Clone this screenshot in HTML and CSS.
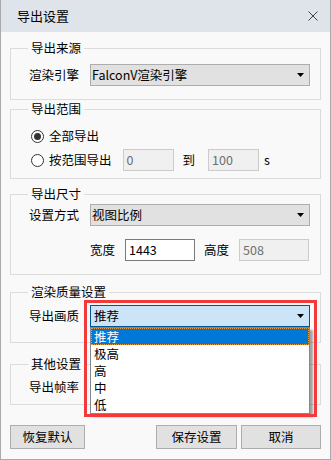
FILE: index.html
```html
<!DOCTYPE html>
<html>
<head>
    <title>导出设置</title>
    <meta charset="utf-8">
    <link rel="stylesheet" href="styles.css">
</head>
<body>
    <div class="window">
        <div class="titlebar">
            <span class="title">导出设置</span>
            <svg class="close" width="10" height="10" viewBox="0 0 10 10">
                <path d="M0.5 0.5L9.5 9.5M9.5 0.5L0.5 9.5" stroke="#444" stroke-width="1" fill="none"/>
            </svg>
        </div>

        <div class="content">
            <fieldset class="group group-source">
                <legend>导出来源</legend>
                <div class="row">
                    <span class="label">渲染引擎</span>
                    <div class="select">
                        <span>FalconV渲染引擎</span>
                        <svg class="arrow" width="7" height="4" viewBox="0 0 7 4"><path d="M0 0H7L3.5 4Z" fill="#000"/></svg>
                    </div>
                </div>
            </fieldset>

            <fieldset class="group group-range">
                <legend>导出范围</legend>
                <div class="row row-radio">
                    <span class="radio checked"></span>
                    <span>全部导出</span>
                </div>
                <div class="row row-radio row-range">
                    <span class="radio"></span>
                    <span class="radio-text">按范围导出</span>
                    <div class="input input-small disabled">0</div>
                    <span class="to">到</span>
                    <div class="input input-small disabled">100</div>
                    <span class="unit">s</span>
                </div>
            </fieldset>

            <fieldset class="group group-size">
                <legend>导出尺寸</legend>
                <div class="row">
                    <span class="label">设置方式</span>
                    <div class="select">
                        <span>视图比例</span>
                        <svg class="arrow" width="7" height="4" viewBox="0 0 7 4"><path d="M0 0H7L3.5 4Z" fill="#000"/></svg>
                    </div>
                </div>
                <div class="row row-dims">
                    <span>宽度</span>
                    <div class="input input-wide">1443</div>
                    <span class="dim-label">高度</span>
                    <div class="input input-wide disabled">508</div>
                </div>
            </fieldset>

            <fieldset class="group group-quality">
                <legend>渲染质量设置</legend>
                <div class="row">
                    <span class="label">导出画质</span>
                    <div class="select-wrap">
                        <div class="select select-open">
                            <span>推荐</span>
                            <svg class="arrow" width="7" height="4" viewBox="0 0 7 4"><path d="M0 0H7L3.5 4Z" fill="#000"/></svg>
                        </div>
                        <ul class="dropdown">
                            <li class="selected">推荐</li>
                            <li>极高</li>
                            <li>高</li>
                            <li>中</li>
                            <li>低</li>
                        </ul>
                        <div class="mark"></div>
                    </div>
                </div>
            </fieldset>

            <fieldset class="group group-other">
                <legend>其他设置</legend>
                <div class="row">
                    <span class="label">导出帧率</span>
                    <!-- the frame-rate combo sits under the open list -->
                    <div class="select"></div>
                </div>
            </fieldset>
        </div>

        <div class="buttons">
            <div class="btn btn-reset">恢复默认</div>
            <div class="btn btn-save">保存设置</div>
            <div class="btn btn-cancel">取消</div>
        </div>
    </div>
</body>
</html>
```

FILE: styles.css
```css
* {
    box-sizing: border-box;
}
body {
    margin: 0;
    font-family: "Noto Sans CJK SC", "Noto Sans", sans-serif;
    font-size: 12.5px;
    line-height: 16px;
    color: #000;
}
.window {
    width: 331px;
    height: 460px;
    background: #f9f9f9;
    border: 1px solid #a9a9a9;
    border-top: none;
}
.titlebar {
    height: 32px;
    background: #dfe3ea;
    display: flex;
    align-items: center;
    justify-content: space-between;
    padding: 0 12px 0 16px;
}
.title {
    font-size: 13px;
}
.close {
    display: block;
}
.content {
    padding: 0 9px;
}
.group {
    margin: 0;
    border: 1px solid #dcdcdc;
    padding: 0 10px;
    min-width: 0;
}
.group legend {
    padding: 0 3px;
    margin-left: 7px;
    line-height: 16px;
}
.row {
    display: flex;
    align-items: center;
    height: 22px;
}
.label {
    width: 58px;
    margin-right: 11px;
    text-align: right;
}
.select {
    flex: 1;
    height: 22px;
    border: 1px solid #adadad;
    background: #e1e1e1;
    display: flex;
    align-items: center;
    justify-content: space-between;
    padding: 0 5px 0 1px;
}
.arrow {
    display: block;
}

/* group spacing */
.group-source {
    margin-top: 8px;
    padding-top: 8px;
    padding-bottom: 13px;
}
.group-range {
    margin-top: 1px;
    padding-top: 9px;
    padding-bottom: 7px;
}
.group-size {
    margin-top: 7px;
    padding-top: 2px;
    padding-bottom: 13px;
}
.group-quality {
    margin-top: 9px;
    padding-top: 5px;
    padding-bottom: 15px;
}
.group-other {
    margin-top: 13px;
    padding-top: 4px;
    padding-bottom: 6px;
}

/* radios */
.row-radio {
    height: 20px;
    padding-left: 10px;
}
.row-range {
    height: 22px;
    margin-top: 3px;
}
.radio {
    width: 13px;
    height: 13px;
    border: 1px solid #333;
    border-radius: 50%;
    background: #fff;
    margin-right: 5px;
    position: relative;
    flex-shrink: 0;
}
.radio.checked::after {
    content: "";
    position: absolute;
    left: 2px;
    top: 2px;
    width: 7px;
    height: 7px;
    border-radius: 50%;
    background: #333;
}
.radio-text {
    margin-right: 11px;
}
.input {
    height: 22px;
    border: 1px solid #7a7a7a;
    background: #fff;
    padding-left: 3px;
    display: flex;
    align-items: center;
}
.input.disabled {
    border-color: #cccccc;
    background: #f0f0f0;
    color: #6d6d6d;
}
.input-small {
    width: 51px;
}
.to {
    margin: 0 13px 0 9px;
}
.unit {
    margin-left: 5px;
}

/* size */
.row-dims {
    margin-top: 13px;
    padding-left: 69px;
}
.input-wide {
    width: 70px;
    margin-left: 10px;
}
.dim-label {
    margin-left: 9px;
}

/* open combo */
.select-wrap {
    flex: 1;
    position: relative;
}
.select-open {
    background: #cce4f7;
    border-color: #005499;
    padding-left: 3px;
}
.dropdown {
    position: absolute;
    left: 0;
    top: 22px;
    width: 100%;
    margin: 0;
    padding: 0;
    list-style: none;
    background: #fff;
    border: 1px solid #828790;
    box-shadow: 3px 3px 2px rgba(0, 0, 0, 0.35);
}
.dropdown li {
    height: 17px;
    line-height: 17px;
    padding-left: 3px;
}
.dropdown .selected {
    background: #0078d7;
    color: #fff;
    outline: 1px dotted #e89a3c;
    outline-offset: -1px;
}
.mark {
    position: absolute;
    left: -6px;
    top: -5px;
    width: 233px;
    height: 117px;
    border: 3px solid #f23a3a;
}

/* buttons */
.buttons {
    display: flex;
    margin-top: 20px;
    padding: 0 9px;
}
.btn {
    height: 24px;
    border: 1px solid #adadad;
    background: #e1e1e1;
    display: flex;
    align-items: center;
    justify-content: center;
}
.btn-reset {
    width: 75px;
}
.btn-save {
    width: 81px;
    margin-left: auto;
}
.btn-cancel {
    width: 80px;
    margin-left: 4px;
}
```
